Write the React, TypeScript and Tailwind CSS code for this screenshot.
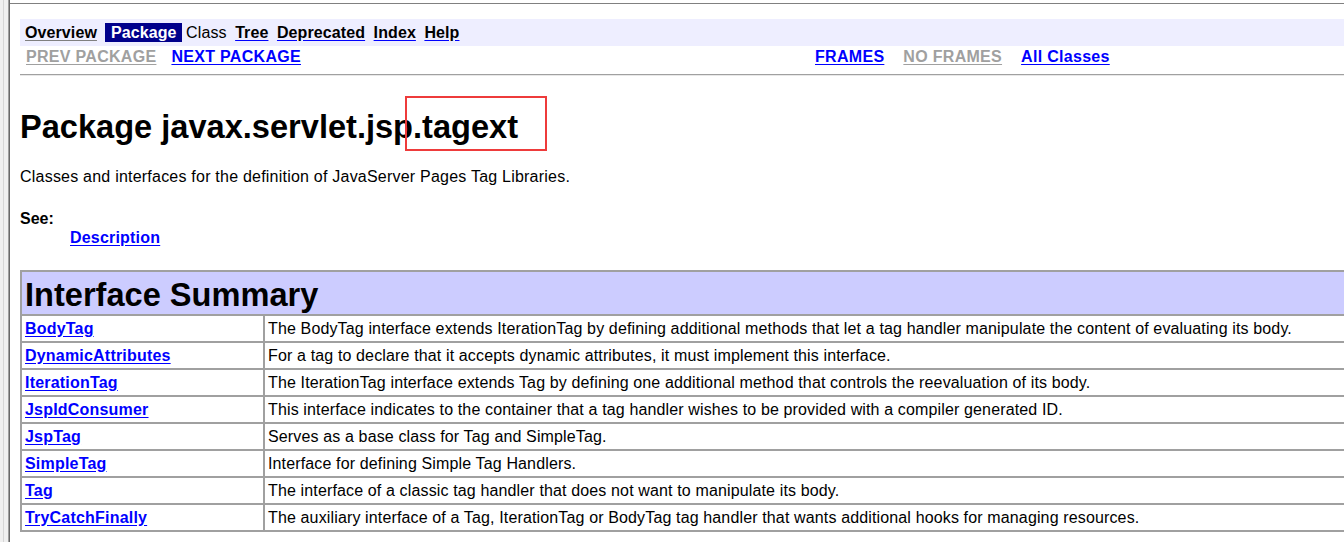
import React from "react";

const font = { fontFamily: '"Liberation Sans", Arial, sans-serif' };

const interfaces = [
  {
    name: "BodyTag",
    desc: "The BodyTag interface extends IterationTag by defining additional methods that let a tag handler manipulate the content of evaluating its body.",
  },
  {
    name: "DynamicAttributes",
    desc: "For a tag to declare that it accepts dynamic attributes, it must implement this interface.",
  },
  {
    name: "IterationTag",
    desc: "The IterationTag interface extends Tag by defining one additional method that controls the reevaluation of its body.",
  },
  {
    name: "JspIdConsumer",
    desc: "This interface indicates to the container that a tag handler wishes to be provided with a compiler generated ID.",
  },
  { name: "JspTag", desc: "Serves as a base class for Tag and SimpleTag." },
  { name: "SimpleTag", desc: "Interface for defining Simple Tag Handlers." },
  {
    name: "Tag",
    desc: "The interface of a classic tag handler that does not want to manipulate its body.",
  },
  {
    name: "TryCatchFinally",
    desc: "The auxiliary interface of a Tag, IterationTag or BodyTag tag handler that wants additional hooks for managing resources.",
  },
];

const navItems = [
  { label: "Overview", kind: "visited" },
  { label: "Package", kind: "current" },
  { label: "Class", kind: "plain" },
  { label: "Tree", kind: "link" },
  { label: "Deprecated", kind: "link" },
  { label: "Index", kind: "link" },
  { label: "Help", kind: "link" },
];

const App = () => {
  return (
    <div
      className="relative flex h-[542px] w-[1344px] overflow-hidden bg-white text-black"
      style={font}
    >
      {/* window frame on the left */}
      <div className="flex h-full shrink-0">
        <div className="w-[3px] bg-[#f0f0f0]" />
        <div className="w-px bg-[#d6d6d6]" />
        <div className="w-[4px] bg-[#f0f0f0]" />
        <div className="w-px bg-[#a0a0a0]" />
        <div className="w-px bg-[#696969]" />
      </div>

      <div className="min-w-0 flex-1 pt-[3px]">
        <div className="border-t border-[#808080] pl-[10px] pt-[15px]">
          {/* top nav bar */}
          <div className="flex h-[27px] items-center gap-[3px] bg-[#eeeeff] pl-[5px] text-[16px] font-bold tracking-[0.1px]">
            {navItems.map((item) => (
              <span
                key={item.label}
                className={
                  item.kind === "current"
                    ? "h-[19px] bg-[#00008b] px-[5.5px] leading-[19px] text-white"
                    : item.kind === "plain"
                      ? "h-[19px] pr-[5.5px] pl-px leading-[19px] font-normal"
                      : "h-[19px] pr-[5.5px] leading-[19px]"
                }
              >
                <span
                  className={
                    item.kind === "link"
                      ? "underline decoration-[#0000ff] underline-offset-[2px]"
                      : item.kind === "visited"
                        ? "underline decoration-[#808080] underline-offset-[2px]"
                        : ""
                  }
                >
                  {item.label}
                </span>
              </span>
            ))}
          </div>

          {/* sub nav */}
          <div className="flex h-[22px] items-center text-[16px] font-bold tracking-[0.3px]">
            <div className="flex w-[795px] pl-[6px]">
              <span className="text-[#a0a0a0] underline underline-offset-[2px]">
                PREV PACKAGE
              </span>
              <span className="ml-[15px] text-[#0000ff] underline underline-offset-[2px]">
                NEXT PACKAGE
              </span>
            </div>
            <div className="flex gap-[19px]">
              <span className="text-[#0000ff] underline underline-offset-[2px]">
                FRAMES
              </span>
              <span className="text-[#a0a0a0] underline underline-offset-[2px]">
                NO FRAMES
              </span>
              <span className="text-[#0000ff] underline underline-offset-[2px]">
                All Classes
              </span>
            </div>
          </div>

          <div className="mt-[6px] h-[2px] border-t border-b border-t-[#a0a0a0] border-b-[#e8e8e8]" />

          <h1 className="mt-[32px] text-[32.6px] font-bold leading-[37px]">
            Package javax.servlet.jsp.tagext
          </h1>

          <p className="mt-[23px] text-[16px] leading-[18px] tracking-[0.22px]">
            Classes and interfaces for the definition of JavaServer Pages Tag
            Libraries.
          </p>

          <div className="mt-[24px] text-[16px] leading-[18px]">
            <div className="font-bold">See:</div>
            <div className="mt-px pl-[50px] font-bold tracking-[0.2px] text-[#0000ff] underline underline-offset-[2px]">
              Description
            </div>
          </div>

          {/* Interface Summary table */}
          <div className="mt-[23px] w-[1400px] border border-[#a0a0a0]">
            <div className="flex h-[44px] items-center border border-[#a0a0a0] bg-[#ccccff] px-[3px] pt-[2px]">
              <span className="text-[32.6px] font-bold leading-[37px]">
                Interface Summary
              </span>
            </div>
            {interfaces.map((row) => (
              <div key={row.name} className="flex h-[27px] text-[16px]">
                <div className="flex w-[243px] shrink-0 items-center border border-[#a0a0a0] px-[3px]">
                  <span className="font-bold tracking-[0.2px] text-[#0000ff] underline underline-offset-[2px]">
                    {row.name}
                  </span>
                </div>
                <div className="flex flex-1 items-center border border-[#a0a0a0] px-[3px] tracking-[0.14px] whitespace-nowrap">
                  {row.desc}
                </div>
              </div>
            ))}
          </div>
        </div>
      </div>

      {/* red annotation box */}
      <div className="absolute left-[405px] top-[96px] h-[55px] w-[142px] border-2 border-[#ee3b3b]" />
    </div>
  );
};

export default App;
